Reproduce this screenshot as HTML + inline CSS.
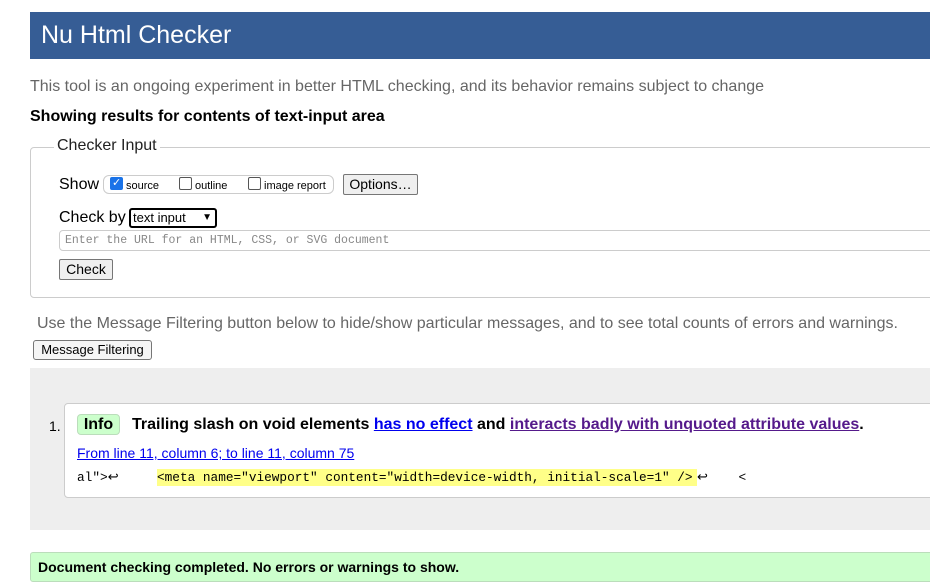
<!DOCTYPE html><html><head><style>
body{margin:0;width:930px;height:588px;background:#fff;font-family:"Liberation Sans",Arial,sans-serif;position:relative;overflow:hidden}
.a{position:absolute;white-space:nowrap}
.btn{position:absolute;background:#efefef;border:1px solid #767676;border-radius:2px;font-size:14px;line-height:18px;text-align:center;color:#000}
.cb{display:inline-block;width:11px;height:11px;border:1px solid #555;border-radius:2px;vertical-align:-1px;margin-right:3px;background:#fff}
</style></head><body>
<div class="a" style="left:30px;top:12px;width:900px;height:47px;background:#365d95"></div>
<div class="a" style="left:41px;top:21px;font-size:25px;color:#fff">Nu Html Checker</div>
<div class="a" style="left:30px;top:78px;font-size:16px;color:#666">This tool is an ongoing experiment in better HTML checking, and its behavior remains subject to change</div>
<div class="a" style="left:30px;top:108px;font-size:16px;font-weight:bold;color:#000">Showing results for contents of text-input area</div>
<div class="a" style="left:30px;top:147px;width:910px;height:149px;border:1px solid #ccc;border-radius:4px"></div>
<div class="a" style="left:54px;top:137px;padding:0 3px;background:#fff;font-size:16px;color:#222">Checker Input</div>
<div class="a" style="left:59px;top:176px;font-size:16px">Show</div>
<div class="a" style="left:103px;top:175px;width:229px;height:17px;border:1px solid #ccc;border-radius:6px"></div>
<div class="a" style="left:110px;top:177px;font-size:11px;line-height:16px"><span class="cb" style="background:#1a73e8;border-color:#1a73e8;position:relative"><span style="position:absolute;left:1px;top:-3px;color:#fff;font-size:11px">✓</span></span>source</div>
<div class="a" style="left:179px;top:177px;font-size:11px;line-height:16px"><span class="cb"></span>outline</div>
<div class="a" style="left:248px;top:177px;font-size:11px;line-height:16px"><span class="cb"></span>image report</div>
<div class="btn" style="left:343px;top:174px;width:73px;height:19px">Options…</div>
<div class="a" style="left:59px;top:209px;font-size:16px">Check by</div>
<div class="a" style="left:129px;top:208px;width:82px;height:16px;border:2px solid #000;border-radius:3px;font-size:13px;line-height:16px;padding-left:2px">text input <span style="position:absolute;right:3px;font-size:10px">▼</span></div>
<div class="a" style="left:59px;top:230px;width:880px;height:19px;border:1px solid #ccc;border-radius:4px"></div>
<div class="a" style="left:65px;top:234px;font-family:'Liberation Mono',monospace;font-size:11.5px;color:#888">Enter the URL for an HTML, CSS, or SVG document</div>
<div class="btn" style="left:59px;top:259px;width:52px;height:19px">Check</div>
<div class="a" style="left:37px;top:315px;font-size:16px;color:#666">Use the Message Filtering button below to hide/show particular messages, and to see total counts of errors and warnings.</div>
<div class="btn" style="left:33px;top:340px;width:117px;height:18px;border-radius:3px;font-size:13px;background:#f5f5f5">Message Filtering</div>
<div class="a" style="left:30px;top:368px;width:900px;height:162px;background:#eee"></div>
<div class="a" style="left:64px;top:403px;width:880px;height:93px;background:#fff;border:1px solid #ccc;border-radius:4px"></div>
<div class="a" style="left:49px;top:418px;font-size:14px">1.</div>
<div class="a" style="left:77px;top:414px;width:41px;height:19px;background:#cfc;border:1px solid #bdb;border-radius:4px;font-size:16px;font-weight:bold;text-align:center;line-height:19px">Info</div>
<div class="a" style="left:132px;top:416px;font-size:16px;font-weight:bold">Trailing slash on void elements <a style="color:#00e;text-decoration:underline">has no effect</a> and <a style="color:#551a8b;text-decoration:underline">interacts badly with unquoted attribute values</a>.</div>
<div class="a" style="left:77px;top:445px;font-size:14px;color:#00e;text-decoration:underline">From line 11, column 6; to line 11, column 75</div>
<div class="a" style="left:77px;top:469px;font-family:'Liberation Mono',monospace;font-size:12.8px;line-height:17px">al"&gt;↩</div>
<div class="a" style="left:157px;top:469px;width:540px;height:17px;background:#ff8;font-family:'Liberation Mono',monospace;font-size:12.75px;line-height:17px">&lt;meta name="viewport" content="width=device-width, initial-scale=1" /&gt;</div>
<div class="a" style="left:697px;top:469px;font-family:'Liberation Mono',monospace;font-size:12.8px;line-height:17px">↩&nbsp;&nbsp;&nbsp;&nbsp;&lt;</div>
<div class="a" style="left:30px;top:552px;width:910px;height:28px;background:#cfc;border:1px solid #bdb;border-radius:3px"></div>
<div class="a" style="left:38px;top:559px;font-size:14px;font-weight:bold">Document checking completed. No errors or warnings to show.</div>
</body></html>
